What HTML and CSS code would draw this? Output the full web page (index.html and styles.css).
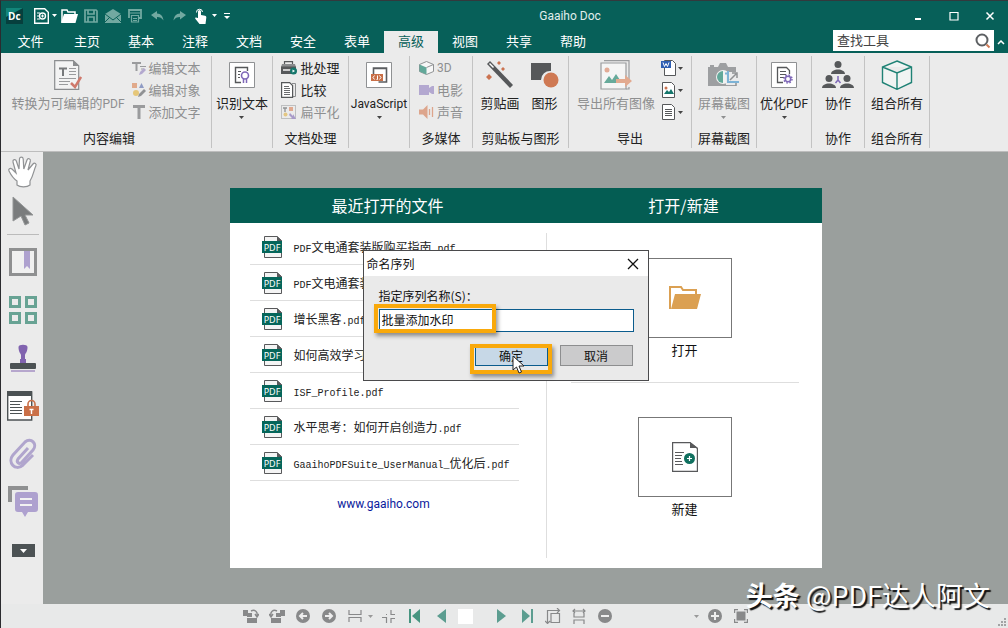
FILE: index.html
```html
<!DOCTYPE html>
<html lang="zh-CN">
<head>
    <meta charset="UTF-8">
    <meta name="viewport" content="width=device-width, initial-scale=1.0">
    <title>Gaaiho Doc</title>
    <link rel="stylesheet" href="styles.css">
</head>
<body>
    <svg class="defs" width="0" height="0" aria-hidden="true">
        <symbol id="caret" viewBox="0 0 5 3"><path d="M0 0h5L2.500 3z" fill="currentColor"/></symbol>
        <symbol id="pdf" viewBox="0 0 20 22">
            <path d="M2.500 .5H15l4.500 4v17h-17z" fill="#f4f4f4" stroke="#58595b"/>
            <path d="M15 0v5h5z" fill="#58595b"/>
            <rect y="5" width="20" height="12" fill="#05665a"/>
            <text x="10" y="15" text-anchor="middle" class="pdf-text">PDF</text>
        </symbol>
    </svg>

    <div class="app">
        <header class="titlebar">
            <div class="quick">
                <svg class="logo" width="17" height="16" viewBox="0 0 17 16"><rect width="17" height="16" fill="#063f3d"/><path d="M0 0h17L0 9z" fill="#12857a"/><text x="2" y="12" class="logo-text">Dc</text></svg>
                <button class="q-new" aria-label="新建"><svg width="15" height="16" viewBox="0 0 15 16"><path d="M.7.700h10l3.600 3.500v11.100H.7z" fill="none" stroke="#fff" stroke-width="1.400"/><path d="M3 5h3M3 8h2M3 11h3" stroke="#fff"/><circle cx="8.500" cy="8" r="3" fill="none" stroke="#fff" stroke-width="1.400"/><path d="M7 8h3M8.500 6.500v3" stroke="#fff"/></svg></button>
                <svg class="caret white" width="5" height="3"><use href="#caret"/></svg>
                <button class="q-open" aria-label="打开文件"><svg width="17" height="14" viewBox="0 0 17 14"><path d="M1 13V1h5l1 2h7v3" fill="none" stroke="#fff" stroke-width="1.500"/><path d="M3 5h14l-2.500 9H0z" fill="#fff"/></svg></button>
                <button aria-label="保存"><svg width="14" height="14" viewBox="0 0 14 14"><path d="M1 1h11l1 1v11H1zM4 1v4h6V1M4 13V8h6v5" fill="none" stroke="#72a9a1" stroke-width="1.700"/></svg></button>
                <button aria-label="邮件"><svg width="16" height="14" viewBox="0 0 16 14"><path d="M0 5l8-5 8 5v9H0z" fill="#72a9a1"/><path d="M0 5l8 6 8-6M0 13l5-5m11 5l-5-5" fill="none" stroke="#0a6159"/></svg></button>
                <button aria-label="打印"><svg width="14" height="14" viewBox="0 0 14 14"><path d="M1 9V1h12v8h-2" fill="none" stroke="#72a9a1" stroke-width="1.800"/><path d="M2 4h10M3.500 6.500h7V13h-7zM5 9.500h4M5 11.500h4" fill="none" stroke="#72a9a1" stroke-width="1.200"/></svg></button>
                <button aria-label="撤销"><svg width="13" height="10" viewBox="0 0 13 10"><path d="M0 4l6-4v2.500c4 0 6 3 6.500 7C11 7 9 6 6 6v2.500z" fill="#72a9a1"/></svg></button>
                <button aria-label="重做"><svg width="13" height="10" viewBox="0 0 13 10"><path d="M13 4L7 0v2.500C3 2.500 1 5.500.5 9.500 2 7 4 6 7 6v2.500z" fill="#72a9a1"/></svg></button>
                <button aria-label="触摸模式"><svg width="14" height="16" viewBox="0 0 14 16"><path d="M4 10V3.500a1.500 1.500 0 0 1 3 0V7l4 .8c1 .2 1.500 1 1.300 2L11.500 16h-6L1.500 11c-1-1.500.5-2 1.200-1.300z" fill="#fff"/><path d="M2.500 4.500A3 3 0 1 1 8.500 4" fill="none" stroke="#fff"/></svg></button>
                <svg class="caret white" width="5" height="3"><use href="#caret"/></svg>
                <svg class="more" width="6" height="6" viewBox="0 0 6 6"><path d="M0 .5h6" stroke="#fff"/><path d="M0 3h6L3 6z" fill="#fff"/></svg>
            </div>
            <div class="app-title">Gaaiho Doc</div>
            <div class="window-buttons">
                <button aria-label="最小化"><svg width="10" height="10"><path d="M2 8h6" stroke="#fff" stroke-width="2"/></svg></button>
                <button aria-label="最大化"><svg width="10" height="10"><path d="M1 1.500h8v7.500H1z" fill="none" stroke="#fff" stroke-width="1.200"/></svg></button>
                <button aria-label="关闭"><svg width="10" height="10"><path d="M1.500 1.500l7 7m0-7l-7 7" stroke="#fff" stroke-width="1.500"/></svg></button>
            </div>
        </header>

        <nav class="tabs">
            <button class="tab tab-file">文件</button>
            <button class="tab">主页</button>
            <button class="tab">基本</button>
            <button class="tab">注释</button>
            <button class="tab">文档</button>
            <button class="tab">安全</button>
            <button class="tab">表单</button>
            <button class="tab active">高级</button>
            <button class="tab">视图</button>
            <button class="tab">共享</button>
            <button class="tab">帮助</button>
            <div class="search">
                <input type="text" placeholder="查找工具" aria-label="查找工具">
                <svg width="16" height="16" viewBox="0 0 16 16"><circle cx="7" cy="7" r="5.500" fill="none" stroke="#5d6063" stroke-width="2"/><path d="M11.500 11.500l3 3" stroke="#d07a55" stroke-width="2"/></svg>
            </div>
            <button class="collapse" aria-label="折叠功能区"><svg width="8" height="5"><path d="M1 4l3-3 3 3" fill="none" stroke="#fff" stroke-width="1.500"/></svg></button>
        </nav>

        <div class="ribbon">
            <section class="group g-edit">
                <div class="tools">
                    <button class="big off">
                        <svg width="28" height="30" viewBox="0 0 28 30"><path d="M.7.700h18.500l5.500 5v23.600H.7z" fill="#f3f3f3" stroke="#8b8d8f" stroke-width="1.200"/><path d="M19 0v6h6z" fill="#8b8d8f"/><path d="M5 8.500h8M9 8v8" stroke="#77797b" stroke-width="2"/><path d="M15 8.500h7M15 11.500h7M15 14.500h7M5 18.500h17M5 21.500h11M5 24.500h9" stroke="#9a9b9d"/><path d="M17 23l4 4 6-10" fill="none" stroke="#d0796c" stroke-width="2.500"/></svg>
                        <span>转换为可编辑的<i class="latin">PDF</i></span>
                    </button>
                    <div class="rows">
                        <button class="small off"><svg width="14" height="14" viewBox="0 0 14 14"><path d="M0 1h9v2H5.500v7h-2V3H0z" fill="#9a9b9d"/><path d="M8 5.500h6M9 8h3" stroke="#9a9b9d"/><path d="M7 14l1-3 4-4 2 2-4 4z" fill="#b4a9cf"/></svg>编辑文本</button>
                        <button class="small off"><svg width="14" height="14" viewBox="0 0 14 14"><path d="M0 0h5v5H0z" fill="#e1aa8b"/><path d="M7 5l2.500-5L12 5z" fill="#8f9bc4"/><circle cx="4" cy="10" r="3" fill="#e6c779"/><path d="M6 14l1-3 5-5 2 2-5 5z" fill="#909294"/></svg>编辑对象</button>
                        <button class="small off"><svg width="14" height="14" viewBox="0 0 14 14"><path d="M1 0h12v3H8.500v11h-3V3H1z" fill="#9a9b9d"/></svg>添加文字</button>
                    </div>
                </div>
                <h2>内容编辑</h2>
            </section>

            <section class="group g-ocr">
                <div class="tools">
                    <button class="big">
                        <svg width="26" height="26" viewBox="0 0 26 26"><path d="M.5.500h25v25H.5z" fill="#fff" stroke="#8f9193"/><path d="M12 20.500H6.500v-15h12V9" fill="none" stroke="#56585a" stroke-width="1.400"/><path d="M9 9.500h3M9 12.500h2M9 15.500h2" stroke="#56585a"/><circle cx="16" cy="13.500" r="3.500" fill="none" stroke="#7f68b8" stroke-width="1.600"/><path d="M14.500 17v4M17.500 17v4" stroke="#7f68b8" stroke-width="1.500"/></svg>
                        <span>识别文本</span>
                        <svg class="caret" width="5" height="3"><use href="#caret"/></svg>
                    </button>
                </div>
            </section>

            <section class="group g-process">
                <div class="tools">
                    <div class="rows">
                        <button class="small"><svg width="16" height="14" viewBox="0 0 16 14"><path d="M3.500 3V.6h8V3" fill="none" stroke="#56585a" stroke-width="1.200"/><path d="M1 3h13l1 3H0z" fill="#8a8c8e"/><path d="M0 5.500h15V13H0z" fill="#56585a"/><path d="M2 9h8" stroke="#fff" stroke-width="1.400"/><circle cx="12.500" cy="10" r="3.500" fill="#15776c"/><path d="M11.500 8.500l2.500 1.500-2.500 1.500z" fill="#fff"/></svg>批处理</button>
                        <button class="small"><svg width="16" height="16" viewBox="0 0 16 16"><path d="M11 1.500h3.500v13H11" fill="none" stroke="#8a8c8e"/><path d="M.6.600h8l3 3v11.800H.6z" fill="#fff" stroke="#56585a" stroke-width="1.200"/><path d="M3 4.500h5M3 6.500h6M3 8.500h6M3 10.500h6M3 12.500h6" stroke="#6a6c6e"/></svg>比较</button>
                        <button class="small off"><svg width="16" height="16" viewBox="0 0 16 16"><path d="M.5 1.500h14v13H.5z" fill="none" stroke="#909294" stroke-dasharray="1 1"/><path d="M2 4h4M4 4v4" stroke="#909294" stroke-width="1.300"/><path d="M8 3h4v4H8z" fill="#e0a98f"/><circle cx="4.500" cy="10.500" r="2" fill="#e4c783"/><path d="M9 9l3 3v-2l3 5h-5l1-1-3-3z" fill="#a99bc9"/></svg>扁平化</button>
                    </div>
                </div>
                <h2>文档处理</h2>
            </section>

            <section class="group g-js">
                <div class="tools">
                    <button class="big">
                        <svg width="26" height="26" viewBox="0 0 26 26"><path d="M.5.500h25v25H.5z" fill="#fff" stroke="#8f9193"/><path d="M7.500 13V6h13v14h-8M7 6.500h14" fill="none" stroke="#5b5d60" stroke-width="1.600"/><path d="M5 12h12v7H5z" fill="#c96f47"/><path d="M8.500 13.500L7 15.500l1.500 2M13.500 13.500l1.500 2-1.500 2M11.500 13.500v4h-1" fill="none" stroke="#fff"/></svg>
                        <span><i class="latin">JavaScript</i></span>
                        <svg class="caret" width="5" height="3"><use href="#caret"/></svg>
                    </button>
                </div>
            </section>

            <section class="group g-media">
                <div class="tools">
                    <div class="rows">
                        <button class="small off"><svg width="15" height="14" viewBox="0 0 15 14"><path d="M.5 3.500l7-3 7 3v7l-7 3-7-3z" fill="#f7f7f7" stroke="#909294"/><path d="M.5 3.500l7 3v7l-7-3z" fill="#62a899"/><path d="M7.500 6.500l7-3" stroke="#909294"/></svg><i class="latin">3D</i></button>
                        <button class="small off"><svg width="15" height="10" viewBox="0 0 15 10"><path d="M0 0h10v3l3-2h2v8h-2l-3-2v3H0z" fill="#b3a8d0"/></svg>电影</button>
                        <button class="small off"><svg width="15" height="14" viewBox="0 0 15 14"><path d="M0 4.500h4L8.500 0v14L4 9.500H0z" fill="#dda58c"/><path d="M10.500 4v6M13.500 2v10" stroke="#dda58c" stroke-width="1.300"/></svg>声音</button>
                    </div>
                </div>
                <h2>多媒体</h2>
            </section>

            <section class="group g-clip">
                <div class="tools">
                    <button class="big">
                        <svg width="28" height="28" viewBox="0 0 28 28"><path d="M1 3l3-3 23 24-3 3z" fill="#56585a"/><path d="M3 3l1-1 4 4-1 1z" fill="#fff"/><path d="M13 0l2 2-2 2-2-2zM17 6l2 2-2 2-2-2zM3 13l3 3-3 3-3-3z" fill="#cb7350"/></svg>
                        <span>剪贴画</span>
                    </button>
                    <button class="big">
                        <svg width="28" height="26" viewBox="0 0 28 26"><path d="M0 1h20v8a9 9 0 0 0-10 9H0z" fill="#56585a"/><circle cx="20" cy="18" r="7.500" fill="#cf7953"/></svg>
                        <span>图形</span>
                    </button>
                </div>
                <h2>剪贴板与图形</h2>
            </section>

            <section class="group g-export">
                <div class="tools">
                    <button class="big off">
                        <svg width="32" height="30" viewBox="0 0 32 30"><path d="M4 .7h25v19M29 27v2h-3" fill="none" stroke="#9a9c9e" stroke-width="1.200"/><path d="M1 3h25v26H1z" fill="#f5f5f5" stroke="#9a9c9e" stroke-width="1.200"/><circle cx="7" cy="10" r="2.500" fill="#e2ab96"/><path d="M4 23l5-7 3 4 4-6 6 9z" fill="#67aa9b"/><path d="M16 19h9v-4l7 6-7 6v-4h-9z" fill="#e2aa90"/></svg>
                        <span>导出所有图像</span>
                    </button>
                    <div class="rows">
                        <button class="small" aria-label="导出为Word"><svg width="16" height="16" viewBox="0 0 16 16"><path d="M3.500.5h8l3 3v12h-11z" fill="#fff" stroke="#56585a"/><path d="M0 1h10v7H0z" fill="#2f5fb3"/><path d="M2 2.500l1.500 4L5 3.500l1.500 3 1.500-4" fill="none" stroke="#fff"/></svg><svg class="caret" width="5" height="3"><use href="#caret"/></svg></button>
                        <button class="small" aria-label="导出为图像"><svg width="16" height="16" viewBox="0 0 16 16"><path d="M1.500.5h9l3 3v12h-12z" fill="#fff" stroke="#56585a"/><path d="M3 12l3-4 2 2 2-3 3 5z" fill="#15776c"/><circle cx="5" cy="6" r="1.500" fill="#cb7350"/></svg><svg class="caret" width="5" height="3"><use href="#caret"/></svg></button>
                        <button class="small" aria-label="导出为文本"><svg width="16" height="16" viewBox="0 0 16 16"><path d="M1.500.5h9l3 3v12h-12z" fill="#fff" stroke="#56585a"/><path d="M4 5.500h7M4 7.500h7M4 9.500h7M4 11.500h7" stroke="#56585a"/></svg><svg class="caret" width="5" height="3"><use href="#caret"/></svg></button>
                    </div>
                </div>
                <h2>导出</h2>
            </section>

            <section class="group g-shot">
                <div class="tools">
                    <button class="big off">
                        <svg width="32" height="24" viewBox="0 0 32 24"><path d="M0 4h2V2h4v2h4l2-4h6l2 4h8v19H0z" fill="#9d9fa1"/><circle cx="15" cy="14" r="7" fill="#f2f2f2"/><path d="M15 8a6 6 0 0 0 0 12z" fill="#62a899"/><path d="M18 9h14v13H18z" fill="#ebebeb"/><path d="M20 8v11h11M17 10.500h3" fill="none" stroke="#7db3d6" stroke-width="2"/><path d="M22 17l6-6m-4-1h5v5m-1 5v3" fill="none" stroke="#909294" stroke-width="1.500"/></svg>
                        <span>屏幕截图</span>
                        <svg class="caret" width="5" height="3"><use href="#caret"/></svg>
                    </button>
                </div>
                <h2>屏幕截图</h2>
            </section>

            <section class="group g-opt">
                <div class="tools">
                    <button class="big">
                        <svg width="26" height="26" viewBox="0 0 26 26"><path d="M.5.500h25v25H.5z" fill="#fff" stroke="#8f9193"/><path d="M12 20.500H6.500v-15h9l3 3V12" fill="none" stroke="#56585a" stroke-width="1.300"/><path d="M9 9.500h6M9 12.500h6M9 15.500h4" stroke="#56585a"/><circle cx="17" cy="17" r="2.700" fill="none" stroke="#7f68b8" stroke-width="1.500"/><circle cx="17" cy="17" r="4" fill="none" stroke="#7f68b8" stroke-width="1.500" stroke-dasharray="1.600 1.540"/></svg>
                        <span>优化<i class="latin">PDF</i></span>
                        <svg class="caret" width="5" height="3"><use href="#caret"/></svg>
                    </button>
                </div>
            </section>

            <section class="group g-coop">
                <div class="tools">
                    <button class="big">
                        <svg width="32" height="28" viewBox="0 0 32 28"><g fill="#56585a"><circle cx="16" cy="3.500" r="3.500"/><path d="M9 13c0-6 14-6 14 0z"/><circle cx="7" cy="17.500" r="3.500"/><path d="M0 27c0-6 14-6 14 0z"/><circle cx="25" cy="17.500" r="3.500"/><path d="M18 27c0-6 14-6 14 0z"/></g><path d="M16 15v4l-2.500 3M16 19l2.500 3" fill="none" stroke="#7f68b8" stroke-width="1.500"/></svg>
                        <span>协作</span>
                    </button>
                </div>
                <h2>协作</h2>
            </section>

            <section class="group g-all">
                <div class="tools">
                    <button class="big">
                        <svg width="32" height="30" viewBox="0 0 32 30"><path d="M16 1l14.500 6v15.500L16 29.300 1.500 22.500V7zM1.500 7L16 13l14.500-6M16 13v16" fill="#f1f4f3" stroke="#1f8275" stroke-width="1.400"/></svg>
                        <span>组合所有</span>
                    </button>
                </div>
                <h2>组合所有</h2>
            </section>
        </div>

        <div class="middle">
            <aside class="sidebar">
                <button class="pointer" aria-label="手形工具"><svg width="32" height="32" viewBox="0 0 32 32"><path d="M10 29v-4c-3-2-6-6-8-10-1-2 1-3.500 3-2l4 4L6 6c-.5-2.500 2.500-3.500 3.300-1L12 13l.5-10c0-2.500 3.500-2.500 3.700 0l.6 10L20 4c.8-2.300 3.800-1.300 3.300 1L21 14l5-6c1.500-1.800 4-.3 2.800 2-2 4-2.500 10-5.800 15v4c-3 2.500-10 2.500-13 0z" fill="#fff" stroke="#909294" stroke-width="1.200"/></svg></button>
                <button class="pointer" aria-label="选择工具"><svg width="22" height="30" viewBox="0 0 22 30"><path d="M1 1l20 18h-8l4 8-4 2-4-9-8 5z" fill="#7a7c7d" stroke="#949697"/></svg></button>
                <hr>
                <button aria-label="书签"><svg width="28" height="28" viewBox="0 0 28 28"><path d="M1.500 1.500h25v25h-25z" fill="#f0f0f0" stroke="#8f9091" stroke-width="3"/><path d="M15 3h6v18l-3-3-3 3z" fill="#aea1cf"/></svg></button>
                <button aria-label="缩略图"><svg width="28" height="28" viewBox="0 0 28 28"><path d="M1.500 1.500h9v9h-9zM17.500 1.500h9v9h-9zM1.500 17.500h9v9h-9zM17.500 17.500h9v9h-9z" fill="none" stroke="#68a394" stroke-width="3"/></svg></button>
                <button aria-label="印章"><svg width="26" height="28" viewBox="0 0 26 28"><path d="M8.500 3C8.500 0 17.500 0 17.500 3c0 5-2 6-2.500 8v4h1v4h-6v-4h1v-4c-.5-2-2.500-3-2.500-8z" fill="#8163af"/><rect y="19" width="26" height="6" rx="1" fill="#4c5254"/><path d="M1 27h24" stroke="#8163af"/></svg></button>
                <button aria-label="安全表单"><svg width="32" height="30" viewBox="0 0 32 30"><path d="M.7 1h24v28H.7z" fill="#fff" stroke="#4c5254" stroke-width="1.400"/><path d="M0 0h25v5H0z" fill="#4c5254"/><path d="M3 10.500h12M3 13.500h10M3 16.500h12M3 19.500h12M3 22.500h12" stroke="#4c5254"/><path d="M17 15h15v10H17z" fill="#ca7048"/><path d="M21 15v-2a3.500 3.500 0 0 1 7 0v2" fill="none" stroke="#ca7048" stroke-width="1.600"/><path d="M22.500 18.500h4M24.500 18v5" stroke="#fff" stroke-width="1.400"/></svg></button>
                <button aria-label="附件"><svg width="28" height="32" viewBox="0 0 28 32"><path d="M19 10L9 21c-2 3 1 6 4 3l11-12c5-6-2-13-8-8L4 17c-6 7 2 17 10 10l10-10" fill="none" stroke="#b0a5cd" stroke-width="3"/></svg></button>
                <button aria-label="注释"><svg width="30" height="32" viewBox="0 0 30 32"><path d="M2 16V2h18" fill="none" stroke="#8f9091" stroke-width="4"/><path d="M10 6h17a3 3 0 0 1 3 3v14a3 3 0 0 1-3 3h-7l-3 5-3-5h-4a3 3 0 0 1-3-3V9a3 3 0 0 1 3-3z" fill="#aea1cf"/><path d="M12 13h12M12 19h12" stroke="#f2f2f2" stroke-width="2"/></svg></button>
                <button aria-label="更多面板"><svg width="23" height="13" viewBox="0 0 23 13"><path d="M0 0h23v13H0z" fill="#4c5254"/><path d="M8 5h7l-3.500 4z" fill="#fff"/></svg></button>
            </aside>

            <main class="workspace">
                <div class="start">
                    <section class="recent">
                        <h1>最近打开的文件</h1>
                        <ul>
                            <li><a href="#"><svg width="20" height="22"><use href="#pdf"/></svg><span><i>PDF</i>文电通套装版购买指南<i>.pdf</i></span></a></li>
                            <li><a href="#"><svg width="20" height="22"><use href="#pdf"/></svg><span><i>PDF</i>文电通套装</span></a></li>
                            <li><a href="#"><svg width="20" height="22"><use href="#pdf"/></svg><span>增长黑客<i>.pdf</i></span></a></li>
                            <li><a href="#"><svg width="20" height="22"><use href="#pdf"/></svg><span>如何高效学习</span></a></li>
                            <li><a href="#"><svg width="20" height="22"><use href="#pdf"/></svg><span><i>ISF_Profile.pdf</i></span></a></li>
                            <li><a href="#"><svg width="20" height="22"><use href="#pdf"/></svg><span>水平思考：如何开启创造力<i>.pdf</i></span></a></li>
                            <li><a href="#"><svg width="20" height="22"><use href="#pdf"/></svg><span><i>GaaihoPDFSuite_UserManual_</i>优化后<i>.pdf</i></span></a></li>
                        </ul>
                        <a class="site" href="#">www.gaaiho.com</a>
                    </section>
                    <section class="create">
                        <h1>打开/新建</h1>
                        <div class="choices">
                            <button class="choice">
                                <span class="tile"><svg width="32" height="24" viewBox="0 0 32 24"><path d="M1 23V1h11l2 3h13v5" fill="none" stroke="#dba052" stroke-width="2"/><path d="M6 8h26l-4 15H2z" fill="#dba052"/></svg></span>
                                打开
                            </button>
                            <button class="choice">
                                <span class="tile"><svg width="26" height="30" viewBox="0 0 26 30"><path d="M.6.600H18l7.400 6v22.800H.6z" fill="#fff" stroke="#58595b" stroke-width="1.200"/><path d="M18 0v6h8z" fill="#58595b"/><path d="M3 10.500h9M3 13.500h7M3 16.500h6M3 19.500h7M3 22.500h8" stroke="#58595b"/><circle cx="17.500" cy="16.500" r="5.500" fill="#10705f"/><path d="M15 16.500h5M17.500 14v5" stroke="#fff" stroke-width="1.200"/></svg></span>
                                新建
                            </button>
                        </div>
                    </section>

                    <div class="dialog" role="dialog" aria-labelledby="dialogTitle">
                        <div class="dialog-head">
                            <span id="dialogTitle">命名序列</span>
                            <button aria-label="关闭对话框"><svg width="12" height="12"><path d="M1 1l10 10M11 1L1 11" stroke="#111" stroke-width="1.300"/></svg></button>
                        </div>
                        <form class="dialog-body">
                            <label for="sequenceName">指定序列名称(S)：</label>
                            <div class="field">
                                <input type="text" id="sequenceName" value="批量添加水印">
                                <span class="mark mark-name"></span>
                            </div>
                            <div class="actions">
                                <div class="field">
                                    <button type="button" class="ok">确定</button>
                                    <span class="mark mark-ok"></span>
                                    <svg class="cursor" width="13" height="19" viewBox="0 0 13 19"><path d="M1 1v14l3.500-3 2.500 6 2.500-1-2.500-6h5z" fill="#fff" stroke="#222"/></svg>
                                </div>
                                <button type="button">取消</button>
                            </div>
                        </form>
                    </div>
                </div>
            </main>
        </div>

        <footer class="statusbar">
            <button aria-label="向左旋转"><svg width="16" height="15" viewBox="0 0 16 15"><path d="M0 1h5v3h4v4H4V7H0zM4 9h10v5H4z" fill="#88898a"/><path d="M8 2c4-2 7 1 6 5m-2-2l2 3 2-3" fill="none" stroke="#88898a" stroke-width="1.400"/></svg></button>
            <button aria-label="向右旋转"><svg width="16" height="15" viewBox="0 0 16 15"><path d="M16 1h-5v3H7v4h5V7h4zM12 9H2v5h10z" fill="#88898a"/><path d="M8 2C4 0 1 3 2 7m2-2L2 8 0 5" fill="none" stroke="#88898a" stroke-width="1.400"/></svg></button>
            <button aria-label="后退"><svg width="14" height="14" viewBox="0 0 14 14"><circle cx="7" cy="7" r="7" fill="#88898a"/><path d="M11 7H4m3-3L4 7l3 3" fill="none" stroke="#eee" stroke-width="2"/></svg></button>
            <button aria-label="前进"><svg width="14" height="14" viewBox="0 0 14 14"><circle cx="7" cy="7" r="7" fill="#88898a"/><path d="M3 7h7M7 4l3 3-3 3" fill="none" stroke="#eee" stroke-width="2"/></svg></button>
            <button aria-label="页面适配"><svg width="14" height="12" viewBox="0 0 14 12"><path d="M1 0v4.500h12V0M1 12V7.500h12V12" fill="none" stroke="#88898a" stroke-width="1.200"/></svg></button>
            <svg class="caret gray" width="5" height="3"><use href="#caret"/></svg>
            <button class="after-caret" aria-label="退出适配"><svg width="14" height="13" viewBox="0 0 14 13"><path d="M9 0v4.500h4M0 7.500h4.500V13M9 13V8.500h4M4 4.500h1" fill="none" stroke="#88898a" stroke-width="1.200"/></svg></button>
            <button aria-label="第一页"><svg width="12" height="14" viewBox="0 0 12 14"><path d="M1 0v14" stroke="#479580" stroke-width="2"/><path d="M11 0v14L3 7z" fill="#479580"/></svg></button>
            <button aria-label="上一页"><svg width="9" height="14" viewBox="0 0 9 14"><path d="M9 0v14L0 7z" fill="#5c9d90"/></svg></button>
            <input class="page" type="text" aria-label="页码">
            <button aria-label="下一页"><svg width="9" height="14" viewBox="0 0 9 14"><path d="M0 0v14l9-7z" fill="#5c9d90"/></svg></button>
            <button aria-label="最后一页"><svg width="12" height="14" viewBox="0 0 12 14"><path d="M11 0v14" stroke="#5c9d90" stroke-width="2"/><path d="M1 0v14l8-7z" fill="#5c9d90"/></svg></button>
            <button aria-label="适合页面"><svg width="16" height="16" viewBox="0 0 16 16"><path d="M6 5.500h8.500v9H6zM2.500 16V2.500H14M0 13l2.500 2.500L5 13M12 0l2.500 2.500L12 5" fill="none" stroke="#88898a" stroke-width="1.200"/></svg></button>
            <button aria-label="适合宽度"><svg width="14" height="16" viewBox="0 0 14 16"><path d="M1 3h12M3 1L1 3l2 2M11 1l2 2-2 2M2 5v4h10V5M2 16v-4h10v4" fill="none" stroke="#88898a" stroke-width="1.200"/></svg></button>
            <button aria-label="缩小"><svg width="14" height="14" viewBox="0 0 14 14"><circle cx="7" cy="7" r="7" fill="#88898a"/><path d="M3 7h8" stroke="#eee" stroke-width="2"/></svg></button>
            <select class="zoom" aria-label="缩放比例"></select>
            <svg class="caret gray" width="5" height="3"><use href="#caret"/></svg>
            <button class="after-caret" aria-label="放大"><svg width="14" height="14" viewBox="0 0 14 14"><circle cx="7" cy="7" r="7" fill="#88898a"/><path d="M3 7h8M7 3v8" stroke="#eee" stroke-width="2"/></svg></button>
            <button aria-label="全屏"><svg width="14" height="14" viewBox="0 0 14 14"><path d="M.6 4V.6H4M10 .6h3.400V4M13.400 10v3.400H10M4 13.400H.6V10" fill="none" stroke="#88898a" stroke-width="1.200"/><path d="M2.500 2.500h9v9h-9z" fill="#88898a"/></svg></button>
            <svg class="grip" width="8" height="8" viewBox="0 0 8 8"><path d="M6 0h2v2H6zM3 3h2v2H3zM6 3h2v2H6zM0 6h2v2H0zM3 6h2v2H3zM6 6h2v2H6z" fill="#a2a3a4"/></svg>
        </footer>

        <div class="watermark"><b>头条</b> @PDF达人阿文</div>
    </div>
</body>
</html>
```
FILE: styles.css
```css
* {
    box-sizing: border-box;
}
body {
    margin: 0;
    font-family: "Noto Sans CJK SC", sans-serif;
    font-size: 13px;
    line-height: 18px;
    color: #222;
}
button {
    display: flex;
    align-items: center;
    justify-content: center;
    padding: 0;
    border: none;
    background: none;
    color: inherit;
    font: inherit;
}
input, select {
    font: inherit;
}
svg {
    flex: none;
}
h1, h2 {
    margin: 0;
    font-weight: normal;
}
.defs {
    display: none;
}
.latin {
    font: 12px "Roboto", sans-serif;
}
.app {
    position: relative;
    display: flex;
    flex-direction: column;
    height: 100vh;
    min-width: 940px;
    border-top: 1px solid #33393d;
    border-left: 1px solid #2b2b2f;
    overflow: hidden;
}
.caret {
    color: #444;
}
.caret.white {
    color: #fff;
}
.caret.gray {
    color: #999;
}

/* title bar */
.titlebar {
    display: flex;
    align-items: center;
    height: 29px;
    background: #076059;
}
.quick {
    display: flex;
    align-items: center;
    padding-left: 5px;
}
.quick button {
    width: 22px;
    height: 24px;
}
.quick .q-new {
    width: 15px;
    margin: 0 3px 0 11px;
}
.quick .q-open {
    margin-left: 1px;
}
.more {
    margin-left: 7px;
}
.logo-text {
    font: bold 10px "Open Sans", sans-serif;
    fill: #fff;
}
.app-title {
    flex: 1;
    padding-left: 10px;
    text-align: center;
    color: #e0eeec;
    font: 12px/18px "Roboto", sans-serif;
}
.window-buttons {
    display: flex;
}
.window-buttons button {
    width: 36px;
    height: 29px;
}

/* tabs */
.tabs {
    display: flex;
    align-items: flex-end;
    height: 23px;
    background: #076059;
}
.tab {
    width: 54px;
    height: 22px;
    padding-bottom: 2px;
    color: #fff;
}
.tab-file {
    width: 59px;
}
.tab.active {
    background: #ebebeb;
    color: #076059;
}
.search {
    display: flex;
    align-items: center;
    align-self: flex-start;
    width: 161px;
    height: 21px;
    margin-left: auto;
    padding-right: 3px;
    background: #fff;
}
.search input {
    flex: 1;
    min-width: 0;
    padding: 0 4px 2px;
    border: none;
    background: none;
}
.search input::placeholder {
    color: #444;
}
.collapse {
    width: 14px;
    height: 21px;
}

/* ribbon */
.ribbon {
    display: flex;
    height: 99px;
    padding: 3px 0;
    background: #ebebeb;
    border-bottom: 1px solid #bdbdbd;
}
.group {
    display: flex;
    flex-direction: column;
    border-right: 1px solid #c3c3c3;
}
.tools {
    display: flex;
    flex: 1;
    justify-content: center;
}
.group h2 {
    font-size: 13px;
    line-height: 20px;
    text-align: center;
}
.big {
    display: grid;
    grid-template-rows: 37px 20px 8px;
    align-self: flex-start;
    place-items: center;
    white-space: nowrap;
}
.rows {
    display: flex;
    flex-direction: column;
    padding-top: 1px;
}
.small {
    justify-content: flex-start;
    gap: 3px;
    height: 22px;
    white-space: nowrap;
}
.off, .off .caret {
    color: #8e8f90;
}
.g-edit {
    width: 211px;
}
.g-edit .tools {
    gap: 7px;
}
.g-edit h2 {
    padding-left: 6px;
}
.g-ocr, .g-js {
    width: 61px;
}
.g-process {
    width: 76px;
}
.g-media {
    width: 63px;
}
.g-clip {
    width: 96px;
}
.g-clip .tools {
    gap: 11px;
    padding-right: 2px;
}
.g-export {
    width: 123px;
}
.g-export .tools {
    gap: 6px;
}
.g-export .small {
    gap: 1px;
}
.g-shot, .g-all {
    width: 65px;
}
.g-opt {
    width: 55px;
}
.g-coop {
    width: 53px;
}

/* work area */
.middle {
    display: flex;
    flex: 1;
    min-height: 0;
}
.sidebar {
    display: flex;
    flex-direction: column;
    width: 42px;
    padding-left: 2px;
    background: #ebebeb;
}
.sidebar button {
    height: 48px;
}
.sidebar .pointer {
    height: 39px;
}
.sidebar hr {
    width: 32px;
    margin: 4px auto 3px;
    border: none;
    border-top: 1px solid #bbb;
}
.workspace {
    display: flex;
    flex: 1;
    align-items: center;
    justify-content: center;
    background: #9a9f9d;
}
.start {
    position: relative;
    display: grid;
    grid-template-columns: 316fr 276fr;
    width: 592px;
    height: 380px;
    background: linear-gradient(#045d53 35px, #fff 35px);
}
.start h1 {
    font-size: 16px;
    line-height: 35px;
    text-align: center;
    color: #fff;
}
.recent, .create {
    display: flex;
    flex-direction: column;
}
.recent ul {
    margin: 6px 27px 14px 20px;
    padding: 0;
    list-style: none;
}
.recent li {
    border-bottom: 1px solid #dedede;
}
.recent li a {
    display: flex;
    align-items: center;
    gap: 12px;
    height: 35px;
    padding-left: 12px;
    color: #222;
    font-size: 12px;
    text-decoration: none;
    white-space: nowrap;
}
.recent i {
    font: 10px "Liberation Mono", monospace;
}
.pdf-text {
    font: 9px "Noto Sans", sans-serif;
    fill: #fff;
}
.site {
    margin-right: 8px;
    text-align: center;
    color: #0a1a9c;
    font: 12px/18px "Roboto", sans-serif;
    text-decoration: none;
}
.choices {
    display: flex;
    flex: 1;
    flex-direction: column;
    margin: 10px 0;
    border-left: 1px solid #dedede;
}
.choice {
    flex-direction: column;
    gap: 3px;
    height: 149px;
    margin: 0 23px 0 24px;
    padding-top: 1px;
    color: #111;
}
.choice + .choice {
    height: 168px;
    border-top: 1px solid #dedede;
}
.tile {
    display: flex;
    align-items: center;
    justify-content: center;
    width: 94px;
    height: 80px;
    border: 1px solid #777;
}

/* dialog */
.dialog {
    position: absolute;
    top: 62px;
    left: 133px;
    width: 286px;
    border: 1px solid #4a4a4c;
    background: #eaeaea;
    color: #111;
    font-size: 12px;
}
.dialog-head {
    display: flex;
    align-items: center;
    justify-content: space-between;
    height: 25px;
    padding: 0 9px 0 3px;
    background: #fff;
}
.dialog-body {
    padding: 11px 14px 14px 15px;
}
.dialog-body label {
    display: block;
}
.field {
    position: relative;
}
.field input {
    display: block;
    width: 100%;
    height: 23px;
    margin-top: 4px;
    padding: 0 2px 2px;
    border: 1px solid #0b5c8d;
    background: #fff;
    color: #111;
}
.actions {
    display: flex;
    justify-content: flex-end;
    gap: 12px;
    margin-top: 13px;
    padding-right: 1px;
}
.actions button {
    width: 73px;
    height: 21px;
    border: 1px solid #8d8e8f;
    background: #cbcbcc;
}
.actions .ok {
    border-color: #0b5c8d;
    background: #c7d8e7;
}
.mark {
    position: absolute;
    border: 4px solid #f9a90b;
    box-shadow: 2px 3px 4px rgba(0, 0, 0, 0.4);
    pointer-events: none;
}
.mark-name {
    top: -5px;
    left: -5px;
    width: 122px;
    height: 29px;
}
.mark-ok {
    top: -1px;
    left: -5px;
    width: 82px;
    height: 30px;
}
.cursor {
    position: absolute;
    top: 10px;
    left: 37px;
}

/* status bar */
.statusbar {
    display: flex;
    align-items: center;
    height: 24px;
    padding: 0 2px 0 237px;
    background: #e8e9e9;
}
.statusbar button {
    width: 26px;
    height: 24px;
}
.statusbar .after-caret {
    margin-left: 3px;
}
.page {
    width: 15px;
    height: 15px;
    margin: 0 15px 0 4px;
    padding: 0;
    border: none;
    background: #fff;
}
.zoom {
    width: 76px;
    height: 20px;
    border: none;
    background: none;
    appearance: none;
}
.grip {
    align-self: flex-end;
    margin: 0 0 2px auto;
}

.watermark {
    position: absolute;
    right: 18px;
    bottom: 14px;
    color: #fff;
    font-size: 27px;
    line-height: 38px;
    text-shadow: 2px 2px 1px #111;
    white-space: nowrap;
}
```
